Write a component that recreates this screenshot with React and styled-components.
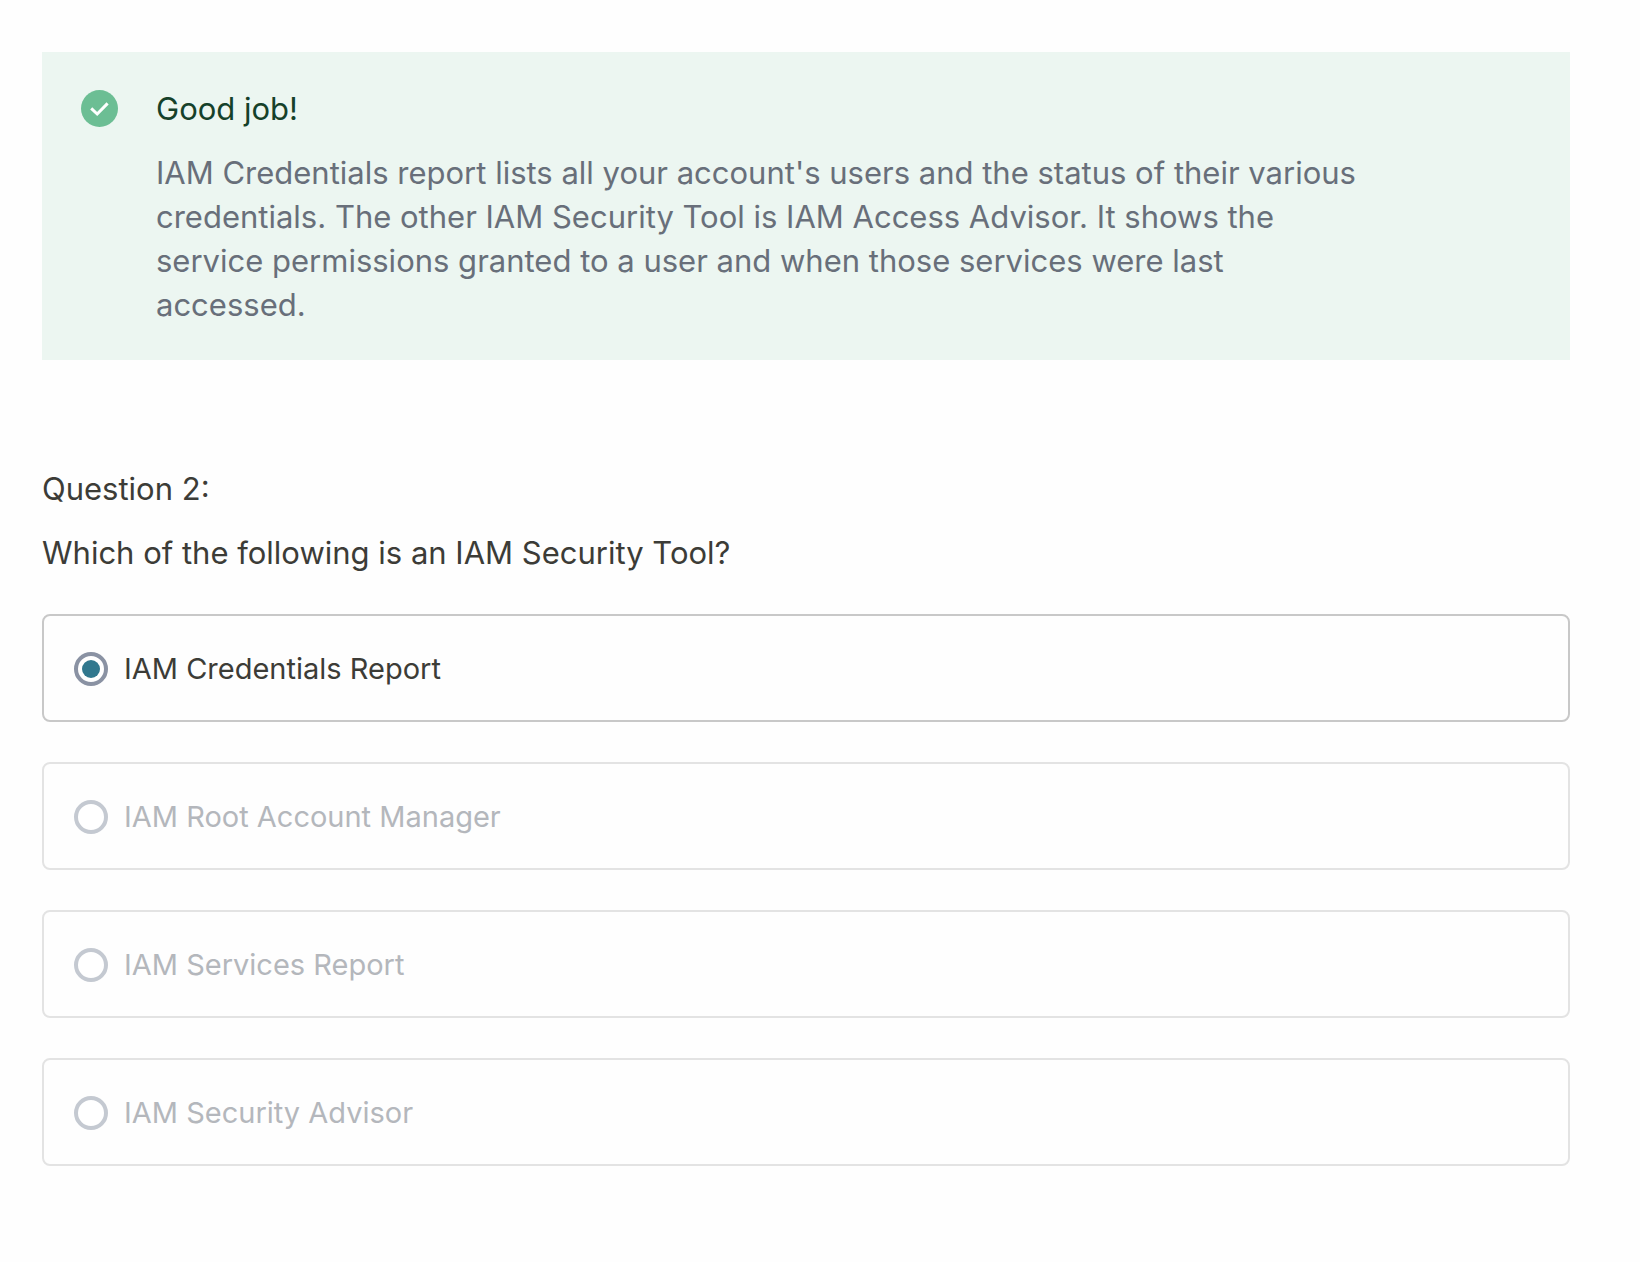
import React, { useState } from "react";
import styled, { createGlobalStyle } from "styled-components";

const GlobalStyle = createGlobalStyle`
  *, *::before, *::after { box-sizing: border-box; }
  body {
    margin: 0;
    background: #fefefe;
    color: #3c3c37;
    font-family: Inter, "Liberation Sans", sans-serif;
  }
`;

const Page = styled.main`
  padding: 52px 70px 96px 42px;
`;

const Feedback = styled.section`
  display: flex;
  align-items: flex-start;
  gap: 38px;
  padding: 35px 204px 33px 39px;
  background: #ecf6f1;
`;

const CheckIcon = styled.svg`
  flex: none;
  width: 37px;
  height: 37px;
  margin: 3px 0;
`;

const FeedbackBody = styled.div`
  display: flex;
  flex: 1;
  flex-direction: column;
  gap: 20px;
  font-size: 31px;
  line-height: 44px;
`;

const FeedbackTitle = styled.h2`
  margin: 0;
  font-size: inherit;
  font-weight: 400;
  color: #15412a;
`;

const FeedbackText = styled.p`
  margin: 0;
  color: #686f7a;
`;

const Question = styled.section`
  display: flex;
  flex-direction: column;
  gap: 20px;
  padding-top: 107px;
  font-size: 31px;
  line-height: 44px;
`;

const QuestionNumber = styled.h3`
  margin: 0;
  font-size: inherit;
  font-weight: 400;
`;

const Choices = styled.fieldset`
  display: flex;
  flex-direction: column;
  gap: 40px;
  min-width: 0;
  margin: 0;
  padding: 0;
  border: 0;
`;

const Prompt = styled.legend`
  margin: 0 0 39px;
  padding: 0;
`;

const Choice = styled.label`
  display: flex;
  align-items: center;
  gap: 16px;
  padding: 33px 30px 31px;
  border: 2px solid ${({ $muted }) => ($muted ? "#e3e3e3" : "#c8c8c8")};
  border-radius: 8px;
  background: #fefefe;
  color: ${({ $muted }) => ($muted ? "#b4b7bc" : "#3c3c37")};
  font-size: 29px;
  line-height: 40px;
`;

const Radio = styled.input`
  appearance: none;
  display: grid;
  place-items: center;
  flex: none;
  width: 34px;
  height: 34px;
  margin: 0;
  border: 4px solid #c4c9d1;
  border-radius: 50%;
  background: #fff;

  &:checked { border-color: #8a92a3; }

  &:checked::before {
    content: "";
    width: 18px;
    height: 18px;
    border-radius: 50%;
    background: #31788e;
  }
`;

const options = [
  "IAM Credentials Report",
  "IAM Root Account Manager",
  "IAM Services Report",
  "IAM Security Advisor",
];

export default function App() {
  const [selected, setSelected] = useState(options[0]);

  return (
    <>
      <GlobalStyle />
      <Page>
        <Feedback>
          <CheckIcon viewBox="0 0 37 37" aria-hidden="true">
            <circle cx="18.5" cy="18.5" r="18.5" fill="#6cbe94" />
            <path d="M10.2 18.4l6 5.6L26.6 13.4" fill="none" stroke="#fff" strokeWidth="3" />
          </CheckIcon>
          <FeedbackBody>
            <FeedbackTitle>Good job!</FeedbackTitle>
            <FeedbackText>
              IAM Credentials report lists all your account's users and the status of their various
              credentials. The other IAM Security Tool is IAM Access Advisor. It shows the service
              permissions granted to a user and when those services were last accessed.
            </FeedbackText>
          </FeedbackBody>
        </Feedback>
        <Question>
          <QuestionNumber>Question 2:</QuestionNumber>
          <Choices>
            <Prompt>Which of the following is an IAM Security Tool?</Prompt>
            {options.map((option) => (
              <Choice key={option} $muted={option !== selected}>
                <Radio
                  type="radio"
                  name="question-2"
                  value={option}
                  checked={option === selected}
                  onChange={() => setSelected(option)}
                />
                <span>{option}</span>
              </Choice>
            ))}
          </Choices>
        </Question>
      </Page>
    </>
  );
}
